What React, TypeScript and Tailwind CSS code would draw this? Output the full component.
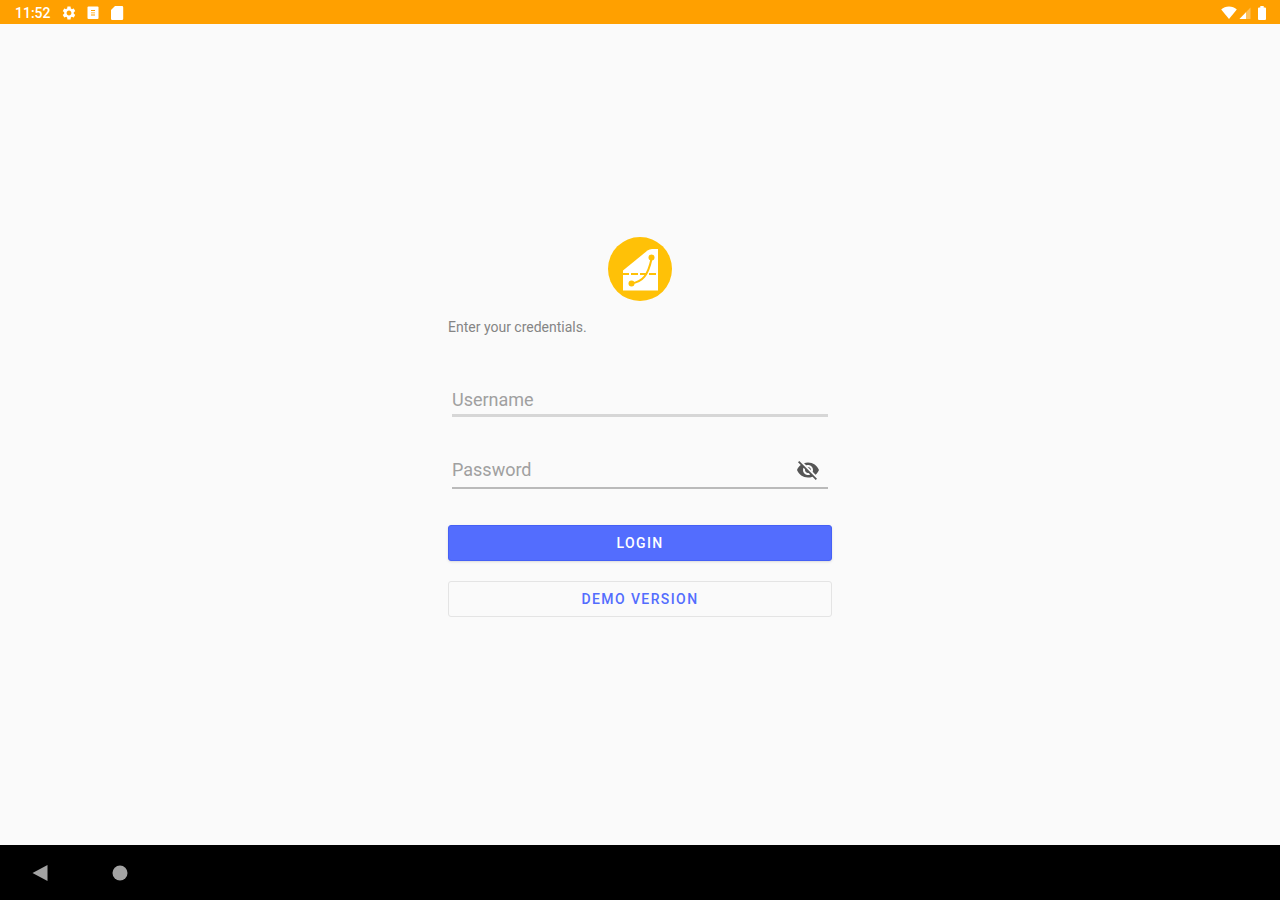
import { useState } from "react";

function StatusBar() {
  return (
    <header className="flex h-6 shrink-0 items-center justify-between bg-[#ffa000] pt-px pl-[15px] pr-3 text-white">
      <div className="flex items-center">
        <span className="w-[46px] text-sm leading-6 font-medium">11:52</span>
        <svg className="mr-2 h-4 w-4" viewBox="0 0 24 24" fill="currentColor" aria-hidden>
          <path d="M19.14 12.94c.04-.3.06-.61.06-.94 0-.32-.02-.64-.07-.94l2.03-1.58c.18-.14.23-.41.12-.61l-1.92-3.32c-.12-.22-.37-.29-.59-.22l-2.39.96c-.5-.38-1.03-.7-1.62-.94L14.4 2.81c-.04-.24-.24-.41-.48-.41h-3.84c-.24 0-.43.17-.47.41L9.25 5.35c-.59.24-1.13.57-1.62.94l-2.39-.96c-.22-.08-.47 0-.59.22L2.74 8.87c-.12.21-.08.47.12.61l2.03 1.58c-.05.3-.09.63-.09.94s.02.64.07.94l-2.03 1.58c-.18.14-.23.41-.12.61l1.92 3.32c.12.22.37.29.59.22l2.39-.96c.5.38 1.03.7 1.62.94l.36 2.54c.05.24.24.41.48.41h3.84c.24 0 .44-.17.47-.41l.36-2.54c.59-.24 1.13-.56 1.62-.94l2.39.96c.22.08.47 0 .59-.22l1.92-3.32c.12-.22.07-.47-.12-.61l-2.01-1.58zM12 15.6c-1.98 0-3.6-1.62-3.6-3.6s1.62-3.6 3.6-3.6 3.6 1.62 3.6 3.6-1.62 3.6-3.6 3.6z" />
        </svg>
        <svg className="mr-2 h-4 w-4" viewBox="0 0 16 16" aria-hidden>
          <rect x="2.500" y="1.500" width="11" height="12.500" rx="1" fill="currentColor" />
          <path d="M6 5h4v1H6zM6 9.500h4v1H6zM6.500 7h1v1.500h-1zM8.500 7h1v1.500h-1z" fill="#ffa000" />
        </svg>
        <svg className="h-4 w-4" viewBox="0 0 16 16" fill="currentColor" aria-hidden>
          <path d="M6 1h7a1.200 1.200 0 0 1 1.200 1.200v11.600A1.200 1.200 0 0 1 13 15H3.200A1.200 1.200 0 0 1 2 13.800V5z" />
        </svg>
      </div>
      <div className="flex items-center">
        <svg className="mr-[2px] h-4 w-4" viewBox="0 0 16 16" fill="currentColor" aria-hidden>
          <path d="M8 14 .2 4.500C2.200 2.500 5 1.500 8 1.500s5.800 1 7.800 3z" />
        </svg>
        <svg className="mr-[6px] h-4 w-3" viewBox="0 0 12 16" fill="currentColor" aria-hidden>
          <path d="M11.500 2.500V14H.5z" opacity=".35" />
          <path d="M7 7.200V14H.5z" />
        </svg>
        <svg className="mr-px h-4 w-[10px]" viewBox="0 0 10 16" fill="currentColor" aria-hidden>
          <path d="M3.300 1h3.400v1.500H8a1 1 0 0 1 1 1V14a1 1 0 0 1-1 1H2a1 1 0 0 1-1-1V3.500a1 1 0 0 1 1-1h1.300z" />
        </svg>
      </div>
    </header>
  );
}

function Logo() {
  return (
    <svg className="h-16 w-16" viewBox="0 0 64 64" role="img" aria-label="Logo">
      <circle cx="32" cy="32" r="32" fill="#ffc107" />
      <path d="M15 53.500V33.500L39.500 13.500Q41.500 12 44 12H50V53.500z" fill="#fff" />
      <g stroke="#ffc107" fill="none">
        <path d="M14 37h37" strokeWidth="2" strokeDasharray="7 2" />
        <path d="M23 46.500C35 45 40 38 43.500 22" strokeWidth="2" />
      </g>
      <circle cx="23.500" cy="46.500" r="3" fill="#ffc107" />
      <circle cx="43.500" cy="20.500" r="3" fill="#ffc107" />
    </svg>
  );
}

function VisibilityOff() {
  return (
    <svg className="h-6 w-6" viewBox="0 0 24 24" fill="currentColor" aria-hidden>
      <path d="M12 7c2.760 0 5 2.240 5 5 0 .65-.13 1.260-.36 1.830l2.920 2.920c1.510-1.260 2.700-2.890 3.430-4.750-1.730-4.390-6-7.500-11-7.500-1.400 0-2.740.25-3.980.7l2.160 2.160C10.740 7.130 11.350 7 12 7zM2 4.270l2.280 2.280.46.46C3.080 8.300 1.780 10.020 1 12c1.730 4.390 6 7.500 11 7.500 1.550 0 3.030-.3 4.380-.84l.42.42L19.730 22 21 20.730 3.270 3 2 4.270zM7.530 9.800l1.550 1.550c-.05.21-.08.43-.08.65 0 1.660 1.340 3 3 3 .22 0 .44-.03.65-.08l1.550 1.550c-.67.33-1.410.53-2.200.53-2.760 0-5-2.240-5-5 0-.79.2-1.530.53-2.200zm4.310-.78l3.150 3.150.02-.16c0-1.660-1.340-3-3-3l-.17.01z" />
    </svg>
  );
}

export default function App() {
  const [showPassword, setShowPassword] = useState(false);

  return (
    <div className="flex min-h-screen flex-col bg-[#fafafa] font-[Roboto,sans-serif]">
      <StatusBar />

      <main className="flex flex-1 flex-col items-center justify-center px-4 pb-4">
        <form className="flex w-full max-w-96 flex-col" onSubmit={(e) => e.preventDefault()}>
          <div className="flex justify-center">
            <Logo />
          </div>
          <p className="mt-4 text-sm leading-5 text-[#858585]">Enter your credentials.</p>

          <div className="mx-1 mt-12 flex h-8 border-b-3 border-[#d6d6d6] pt-[2px]">
            <input
              type="text"
              aria-label="Username"
              placeholder="Username"
              className="w-full text-lg leading-7 outline-none placeholder:text-[#a0a0a0]"
            />
          </div>

          <div className="mx-1 mt-9 flex h-9 items-center border-b-2 border-[#bababa]">
            <input
              type={showPassword ? "text" : "password"}
              aria-label="Password"
              placeholder="Password"
              className="min-w-0 flex-1 text-lg leading-7 outline-none placeholder:text-[#a0a0a0]"
            />
            <button
              type="button"
              aria-label="Toggle password visibility"
              className="mr-2 text-[#555]"
              onClick={() => setShowPassword(!showPassword)}
            >
              <VisibilityOff />
            </button>
          </div>

          <button
            type="submit"
            className="mt-9 h-9 rounded-[3px] border border-[#4560f5] bg-[#536dfe] text-sm font-medium tracking-widest text-white shadow-sm"
          >
            LOGIN
          </button>
          <button
            type="button"
            className="mt-5 h-9 rounded-[3px] border border-[#e4e4e4] text-sm font-medium tracking-widest text-[#536dfe]"
          >
            DEMO VERSION
          </button>
        </form>
      </main>

      <nav className="flex h-[55px] shrink-0 items-center gap-16 bg-black pl-8 text-[#a3a3a3]">
        <button type="button" aria-label="Back">
          <svg className="h-4 w-4" viewBox="0 0 16 16" fill="currentColor" aria-hidden>
            <path d="M.5 8 15.500 0v16z" />
          </svg>
        </button>
        <button type="button" aria-label="Home">
          <svg className="h-4 w-4" viewBox="0 0 16 16" fill="currentColor" aria-hidden>
            <circle cx="8" cy="8" r="7.500" />
          </svg>
        </button>
      </nav>
    </div>
  );
}
